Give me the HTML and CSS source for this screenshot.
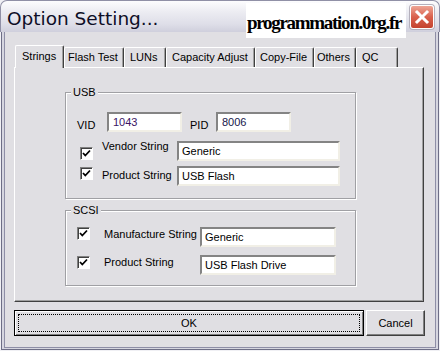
FILE: index.html
```html
<!DOCTYPE html>
<html lang="en">
<head>
    <meta charset="UTF-8">
    <title>Option Setting...</title>
    <link rel="stylesheet" href="styles.css">
</head>
<body>
    <div class="window">
        <div class="titlebar">
            <span class="title">Option Setting...</span>
            <button class="close" title="Close">
                <svg width="22" height="22" viewBox="0 0 22 22">
                    <path d="M6 6 L16 16 M16 6 L6 16" stroke="#fff" stroke-width="3" stroke-linecap="square"/>
                </svg>
            </button>
        </div>

        <!-- site stamp pasted over the caption -->
        <div class="watermark">programmation.0rg.fr</div>

        <div class="frame">
            <div class="client">
                <div class="tabs">
                    <div class="tab active">Strings</div>
                    <div class="tab">Flash Test</div>
                    <div class="tab">LUNs</div>
                    <div class="tab">Capacity Adjust</div>
                    <div class="tab">Copy-File</div>
                    <div class="tab">Others</div>
                    <div class="tab">QC</div>
                </div>

                <div class="panel">
                    <div class="group usb">
                        <span class="group-title">USB</span>
                        <div class="id-row">
                            <label class="id-label">VID</label>
                            <input class="field field-id vid" type="text" value="1043">
                            <label class="id-label pid-label">PID</label>
                            <input class="field field-id" type="text" value="8006">
                        </div>
                        <div class="check-row first">
                            <span class="check"><svg width="9" height="9" viewBox="0 0 9 9"><path d="M1 4 L3.3 6.5 L8 1.5" fill="none" stroke="#000" stroke-width="1.8"/></svg></span>
                            <label class="check-label">Vendor String</label>
                            <input class="field" type="text" value="Generic">
                        </div>
                        <div class="check-row second">
                            <span class="check"><svg width="9" height="9" viewBox="0 0 9 9"><path d="M1 4 L3.3 6.5 L8 1.5" fill="none" stroke="#000" stroke-width="1.8"/></svg></span>
                            <label class="check-label">Product String</label>
                            <input class="field" type="text" value="USB Flash">
                        </div>
                    </div>

                    <div class="group scsi">
                        <span class="group-title">SCSI</span>
                        <div class="check-row first">
                            <span class="check"><svg width="9" height="9" viewBox="0 0 9 9"><path d="M1 4 L3.3 6.5 L8 1.5" fill="none" stroke="#000" stroke-width="1.8"/></svg></span>
                            <label class="check-label">Manufacture String</label>
                            <input class="field" type="text" value="Generic">
                        </div>
                        <div class="check-row second">
                            <span class="check"><svg width="9" height="9" viewBox="0 0 9 9"><path d="M1 4 L3.3 6.5 L8 1.5" fill="none" stroke="#000" stroke-width="1.8"/></svg></span>
                            <label class="check-label">Product String</label>
                            <input class="field" type="text" value="USB Flash Drive">
                        </div>
                    </div>
                </div>

                <div class="buttons">
                    <button class="btn btn-ok">OK</button>
                    <button class="btn btn-cancel">Cancel</button>
                </div>
            </div>
        </div>
    </div>
</body>
</html>
```

FILE: styles.css
```css
body {
    margin: 0;
    background-color: #f0f0f4;
    font-family: "Liberation Sans", Arial, sans-serif;
    font-size: 11px;
    color: #000;
}

.window {
    position: relative;
    width: 440px;
    height: 351px;
    display: flex;
    flex-direction: column;
}

/* caption bar */
.titlebar {
    height: 32px;
    box-sizing: border-box;
    display: flex;
    align-items: flex-start;
    padding: 0 5px 0 6px;
    border: 1px solid #9090a6;
    border-bottom: none;
    border-radius: 7px 7px 0 0;
    background: linear-gradient(#fdfdfe, #ececf2 35%, #dedee8 75%, #cfcfdc);
}

.title {
    margin-top: 8px;
    font-family: "DejaVu Sans", sans-serif;
    font-size: 18.5px;
    line-height: 20px;
    color: #0e0e26;
}

.close {
    margin-left: auto;
    margin-top: 4px;
    width: 24px;
    height: 24px;
    padding: 0;
    border: 1px solid #fff;
    border-radius: 3px;
    background: linear-gradient(#eea696, #d9604c 50%, #c4432f);
    box-shadow: 0 0 0 1px #b4b0bc;
}

.close svg {
    display: block;
}

.watermark {
    position: absolute;
    left: 246px;
    top: 3px;
    width: 160px;
    height: 35px;
    box-sizing: border-box;
    padding: 10px 0 0 1px;
    background-color: #fff;
    font-family: "Liberation Serif", "Times New Roman", serif;
    font-size: 19px;
    font-weight: bold;
    letter-spacing: -1.3px;
    line-height: 20px;
    color: #000;
}

/* window border and client area */
.frame {
    flex: 1;
    display: flex;
    margin: 0 1px 1px;
    padding: 0 2px 1px;
    border: 1px solid #6e6e86;
    border-top: none;
    background-color: #d6d6e0;
}

.client {
    flex: 1;
    border: 1px solid #8e8ea6;
    border-top: none;
    background-color: #e0dfe3;
}

/* tabs */
.tabs {
    display: flex;
    align-items: flex-end;
    height: 22px;
    margin: 13px 0 0 10px;
}

.tab {
    height: 20px;
    box-sizing: border-box;
    padding-left: 5px;
    border-top: 1px solid #fff;
    border-left: 1px solid #fff;
    border-right: 1px solid #404040;
    border-radius: 2px 2px 0 0;
    box-shadow: inset -1px 0 #a0a0a0;
    background-color: #e0dfe3;
    line-height: 19px;
}

.tab.active {
    position: relative;
    z-index: 1;
    height: 23px;
    margin-bottom: -1px;
    padding-left: 6px;
    line-height: 20px;
}

.tab:nth-child(1) { width: 49px; }
.tab:nth-child(2) { width: 60px; padding-left: 3px; }
.tab:nth-child(3) { width: 42px; }
.tab:nth-child(4) { width: 89px; }
.tab:nth-child(5) { width: 59px; padding-left: 4px; }
.tab:nth-child(6) { width: 42px; padding-left: 2px; }
.tab:nth-child(7) { width: 42px; }

.panel {
    width: 410px;
    height: 235px;
    box-sizing: border-box;
    margin-left: 9px;
    padding: 24px 0 0 50px;
    border-top: 1px solid #fff;
    border-left: 1px solid #fff;
    border-right: 1px solid #404040;
    border-bottom: 1px solid #404040;
    box-shadow: inset -1px -1px #a0a0a0;
}

/* group boxes */
.group {
    width: 291px;
    box-sizing: border-box;
    border: 1px solid #a0a0a4;
    box-shadow: inset 1px 1px #fff, 1px 1px #fff;
}

.group.usb {
    padding-bottom: 12px;
}

.group.scsi {
    margin-top: 11px;
    padding-bottom: 10px;
}

.group-title {
    display: block;
    width: fit-content;
    margin: -7px 0 0 5px;
    padding: 0 2px;
    line-height: 13px;
    background-color: #e0dfe3;
}

.id-row {
    display: flex;
    align-items: flex-end;
    margin: 13px 0 0 11px;
}

.id-label {
    width: 30px;
    line-height: 13px;
}

.pid-label {
    width: 26px;
    margin-left: 8px;
}

.field {
    width: 163px;
    height: 20px;
    box-sizing: border-box;
    margin: 0;
    padding: 0 0 0 3px;
    border: 2px solid;
    border-color: #848484 #f1efe6 #f1efe6 #848484;
    background-color: #fff;
    font-family: "Liberation Sans", Arial, sans-serif;
    font-size: 11px;
    color: #000;
    outline: none;
}

.field-id {
    width: 75px;
    padding-left: 4px;
    color: #16164a;
}

.field-id.vid {
    color: #3a1466;
}

.check-row {
    display: flex;
    align-items: flex-start;
}

.check {
    width: 13px;
    height: 13px;
    box-sizing: border-box;
    flex: none;
    padding: 1px;
    border: 1px solid;
    border-color: #808080 #fff #fff #808080;
    box-shadow: inset 1px 1px #404040;
    background-color: #fff;
}

.check svg {
    display: block;
}

.check-label {
    line-height: 13px;
}

/* USB rows */
.usb .check-row {
    padding-left: 14px;
}

.usb .check-label {
    width: 75px;
    margin-left: 9px;
}

.usb .check-row.first {
    margin-top: 8px;
}

.usb .check-row.first .check {
    margin-top: 7px;
}

.usb .check-row.first .field {
    margin-top: 1px;
}

.usb .check-row.second {
    margin-top: 5px;
}

.usb .check-row.second .check {
    margin-top: 1px;
}

.usb .check-row.second .check-label {
    margin-top: 3px;
}

/* SCSI rows */
.scsi .check-row {
    padding-left: 11px;
}

.scsi .check-label {
    width: 96px;
    margin-left: 14px;
    margin-top: 1px;
}

.scsi .field {
    width: 136px;
}

.scsi .check-row.first {
    margin-top: 10px;
}

.scsi .check-row.second {
    margin-top: 8px;
}

.scsi .check-row.second .check {
    margin-top: 1px;
}

/* dialog buttons */
.buttons {
    display: flex;
    gap: 2px;
    margin: 8px 0 0 9px;
}

.btn {
    height: 26px;
    box-sizing: border-box;
    padding: 0;
    background-color: #e0dfe3;
    font-family: "Liberation Sans", Arial, sans-serif;
    font-size: 11px;
    color: #000;
}

.btn-ok {
    width: 350px;
    border: 1px solid #000;
    box-shadow: inset 1px 1px #fff, inset -1px -1px #808080;
    outline: 1px dotted #000;
    outline-offset: -5px;
}

.btn-cancel {
    width: 59px;
    border: 1px solid;
    border-color: #fff #404040 #404040 #fff;
    box-shadow: inset -1px -1px #808080;
}
```
